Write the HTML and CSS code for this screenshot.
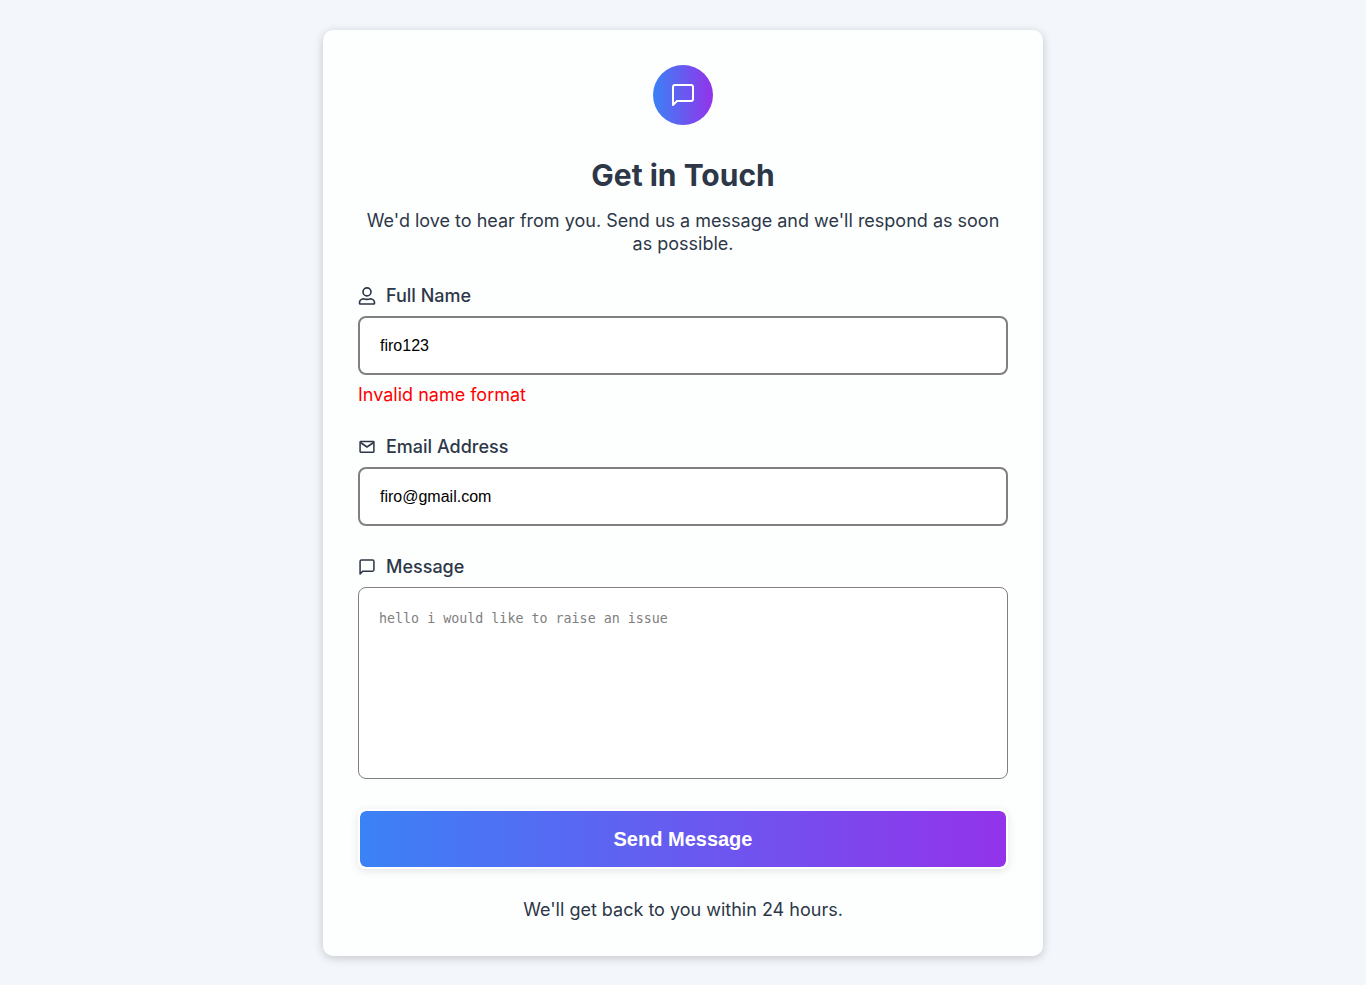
FILE: index.html
```html
<!DOCTYPE html>
<html lang="en">
<head>
<meta charset="utf-8">
<meta name="viewport" content="width=device-width, initial-scale=1">
<title>Get in Touch</title>
<link rel="stylesheet" href="styles.css">
</head>
<body>
<main class="card">
  <header class="intro">
    <div class="badge">
      <svg class="badge-icon" viewBox="0 0 24 24" fill="none" stroke="currentColor" stroke-width="2" stroke-linejoin="round" aria-hidden="true"><path d="M22 16a2 2 0 0 1-2 2H6l-4 4V4a2 2 0 0 1 2-2h16a2 2 0 0 1 2 2z"/></svg>
    </div>
    <h1 class="title">Get in Touch</h1>
    <p class="lead">We'd love to hear from you. Send us a message and we'll respond as soon as possible.</p>
  </header>
  <form class="form">
    <div class="field">
      <label class="label" for="name">
        <svg class="icon" viewBox="0 0 24 24" fill="none" stroke="currentColor" stroke-width="2.200" stroke-linejoin="round" aria-hidden="true"><circle cx="12" cy="6.500" r="5.300"/><path d="M7 15.700q5 1.500 10 0q5 1 5 5.300v.6q0 1-1 1H3q-1 0-1-1V21q0-4.300 5-5.300z"/></svg>
        Full Name
      </label>
      <input class="control" id="name" type="text" value="firo123">
      <p class="error">Invalid name format</p>
    </div>
    <div class="field">
      <label class="label" for="email">
        <svg class="icon" viewBox="-1 -1 26 26" fill="none" stroke="currentColor" stroke-width="2.200" stroke-linejoin="round" aria-hidden="true"><rect x="2" y="4" width="20" height="15.500" rx="1"/><path d="M2.500 5.500 12 12 21.500 5.500"/></svg>
        Email Address
      </label>
      <input class="control" id="email" type="email" value="firo@gmail.com">
    </div>
    <div class="field">
      <label class="label" for="message">
        <svg class="icon" viewBox="-1 -1 26 26" fill="none" stroke="currentColor" stroke-width="2.200" stroke-linejoin="round" aria-hidden="true"><path d="M22 16a2 2 0 0 1-2 2H6l-4 4V4a2 2 0 0 1 2-2h16a2 2 0 0 1 2 2z"/></svg>
        Message
      </label>
      <textarea class="message" id="message" placeholder="hello i would like to raise an issue"></textarea>
    </div>
    <button class="send" type="button">Send Message</button>
  </form>
  <p class="note">We'll get back to you within 24 hours.</p>
</main>
</body>
</html>
```

FILE: styles.css
```css
* {
  box-sizing: border-box;
}

body {
  margin: 0;
  padding: 30px;
  background: #f3f6fb;
  color: #2d3748;
  font: 18px/22px Inter, sans-serif;
}

.card {
  max-width: 720px;
  margin: 0 auto;
  padding: 35px;
  border-radius: 10px;
  background: #fdfffe;
  box-shadow: 0 2px 10px rgba(0, 0, 0, 0.2);
}

.intro {
  text-align: center;
}

.badge {
  display: flex;
  align-items: center;
  justify-content: center;
  width: 60px;
  height: 60px;
  margin: 0 auto 30px;
  border-radius: 50%;
  background: linear-gradient(to right, #3b82f6, #9333ea);
  color: #fff;
}

.badge-icon {
  width: 24px;
  height: 24px;
}

.title {
  margin: 0 0 14px;
  font-size: 30px;
  line-height: 40px;
  font-weight: 700;
}

.lead,
.note,
.error {
  margin: 0;
}

.lead {
  line-height: 23px;
}

.form {
  display: grid;
  gap: 30px;
  margin: 30px 0;
}

.field {
  display: flex;
  flex-direction: column;
}

.label {
  display: flex;
  align-items: center;
  gap: 10px;
  margin-bottom: 9px;
  font-weight: 500;
}

.icon {
  width: 18px;
  height: 18px;
}

.control,
.message {
  width: 100%;
  border: 2px solid #808080;
  border-radius: 8px;
  background: #fff;
}

.control {
  padding: 18px 20px;
  color: #000;
  font: 16px/19px "Liberation Sans", Arial, sans-serif;
}

.message {
  height: 192px;
  padding: 23px 20px;
  border-width: 1px;
  font-family: "DejaVu Sans Mono", monospace;
  resize: none;
}

.message::placeholder {
  color: #808080;
}

.error {
  margin-top: 9px;
  color: #f00;
}

.send {
  width: 100%;
  padding: 16px;
  border: 2px solid #fff;
  border-radius: 8px;
  background: linear-gradient(to right, #3b82f6, #9333ea) padding-box;
  box-shadow: 0 2px 10px rgba(0, 0, 0, 0.1);
  color: #fff;
  font: bold 20px/24px "Liberation Sans", Arial, sans-serif;
}

.note {
  text-align: center;
}
```
